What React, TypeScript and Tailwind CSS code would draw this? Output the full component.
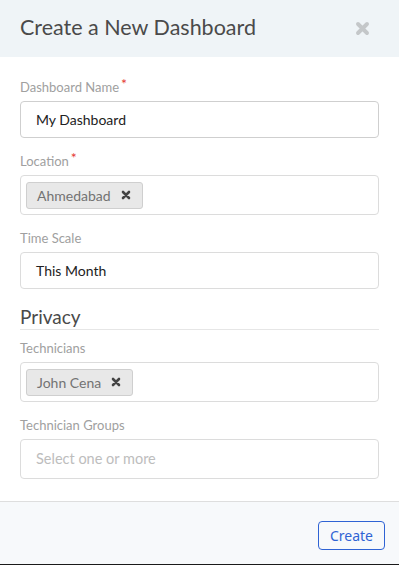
import type { ReactNode } from "react";

function XIcon({ className }: { className?: string }) {
  return (
    <svg viewBox="0 0 10 10" className={className} fill="none">
      <path d="M2 2L8 8M8 2L2 8" stroke="currentColor" strokeWidth="2.6" strokeLinecap="round" />
    </svg>
  );
}

function Field({ label, required, children }: { label: string; required?: boolean; children: ReactNode }) {
  return (
    <div className="flex flex-col">
      <label className="text-[13px] leading-[16px] text-[#a0a0a0] mb-[6px] flex">
        {label}
        {required && <span className="text-[#e53935] text-[14px] leading-[10px] ml-[2px]">*</span>}
      </label>
      {children}
    </div>
  );
}

function Tag({ text }: { text: string }) {
  return (
    <span className="inline-flex items-center gap-[10px] h-[27px] pl-[10px] pr-[11px] bg-[#e8e8e8] border border-[#cfcfcf] rounded-[3px] text-[14px] text-[#737373]">
      {text}
      <XIcon className="w-[10px] h-[10px] text-[#444]" />
    </span>
  );
}

export default function App() {
  return (
    <div className="w-[399px] h-[565px] bg-white flex flex-col border-b border-[#1a1a1a] font-['Lato',sans-serif]">
      <div className="h-[57px] bg-[#eff4f7] flex items-center justify-between pl-[20px] pr-[29px] shrink-0">
        <h1 className="text-[21.5px] text-[#4a4a4a] leading-none pb-[1px]">Create a New Dashboard</h1>
        <XIcon className="w-[15px] h-[15px] text-[#c4c7c9]" />
      </div>

      <div className="flex-1 px-[20px] pt-[22px] flex flex-col">
        <div className="flex flex-col gap-[15px]">
          <Field label="Dashboard Name" required>
            <div className="h-[37px] border border-[#cfcfcf] rounded-[4px] flex items-center pl-[15px] text-[14px] text-[#222]">
              My Dashboard
            </div>
          </Field>
          <Field label="Location" required>
            <div className="h-[40px] border border-[#dcdcdc] rounded-[4px] flex items-center pl-[5px]">
              <Tag text="Ahmedabad" />
            </div>
          </Field>
          <Field label="Time Scale">
            <div className="h-[37px] border border-[#dcdcdc] rounded-[4px] flex items-center pl-[15px] text-[14px] text-[#222]">
              This Month
            </div>
          </Field>
        </div>

        <div className="mt-[16px] border-b border-[#e6e6e6] text-[19px] leading-[24px] text-[#4a4a4a]">
          Privacy
        </div>

        <div className="mt-[10px] flex flex-col gap-[15px]">
          <Field label="Technicians">
            <div className="h-[40px] border border-[#dcdcdc] rounded-[4px] flex items-center pl-[5px]">
              <Tag text="John Cena" />
            </div>
          </Field>
          <Field label="Technician Groups">
            <div className="h-[40px] border border-[#dcdcdc] rounded-[4px] flex items-center pl-[15px] text-[14.5px] text-[#bdbdbd]">
              Select one or more
            </div>
          </Field>
        </div>
      </div>

      <div className="h-[63px] bg-[#f7f9fb] border-t border-[#dedede] flex items-start justify-end pt-[19px] pr-[14px] shrink-0">
        <button className="h-[29px] px-[11px] border border-[#2f63d4] rounded-[4px] text-[#2f63d4] text-[14px] font-['Noto_Sans',sans-serif] leading-none">
          Create
        </button>
      </div>
    </div>
  );
}
